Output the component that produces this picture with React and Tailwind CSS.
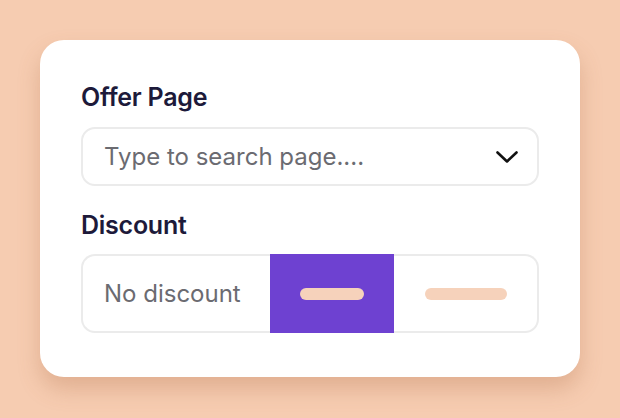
import React from 'react';

function Chevron() {
  return (
    <svg width="22" height="12" viewBox="0 0 22 12" fill="none" className="shrink-0">
      <polyline points="1.5,1.5 11,10.5 20.5,1.5" stroke="#111111" strokeWidth="2.6" strokeLinecap="round" strokeLinejoin="round" />
    </svg>
  );
}

export default function App() {
  return (
    <div className="w-[620px] h-[418px] bg-[#f6ccb1] p-10 font-['Inter',sans-serif]">
      <div className="w-[540px] bg-white rounded-[24px] pt-[43px] pb-[44px] px-[41px] shadow-[0_12px_22px_rgba(170,100,60,0.28)]">
        {/* Offer page */}
        <div className="text-[25px] leading-[28px] font-semibold text-[#1d1a3a] tracking-[-0.01em]">Offer Page</div>
        <div className="mt-4 h-[59px] border-2 border-[#ebebeb] rounded-[14px] flex items-center justify-between pl-[21px] pr-[19px]">
          <span className="text-[24px] text-[#6b6b71]">Type to search page....</span>
          <Chevron />
        </div>

        {/* Discount */}
        <div className="mt-[25px] text-[25px] leading-[28px] font-semibold text-[#1d1a3a] tracking-[-0.01em]">Discount</div>
        <div className="mt-[15px] h-[79px] flex">
          <div className="w-[189px] border-2 border-r-0 border-[#ebebeb] rounded-l-[14px] flex items-center pl-[21px]">
            <span className="text-[24px] text-[#6b6b71]">No discount</span>
          </div>
          <div className="w-[124px] bg-[#6e41d1] flex items-center justify-center">
            <div className="w-16 h-3 rounded-full bg-[#f6d2bb]" />
          </div>
          <div className="flex-1 border-2 border-l-0 border-[#ebebeb] rounded-r-[14px] flex items-center justify-center">
            <div className="w-[82px] h-3 rounded-full bg-[#f6d2bb]" />
          </div>
        </div>
      </div>
    </div>
  );
}
